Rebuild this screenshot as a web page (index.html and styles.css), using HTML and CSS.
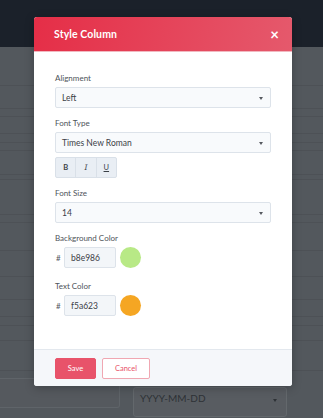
FILE: index.html
```html
<!DOCTYPE html>
<html>
<head>
  <link rel="stylesheet" href="styles.css">
</head>
<body>
  <!-- page behind the modal -->
  <div class="page">
    <div class="topbar"></div>
    <div class="rows">
      <div class="row" style="height: 39px;"></div>
      <div class="row" style="height: 23px;"></div>
      <div class="row" style="height: 8px;"></div>
      <div class="row" style="height: 17px;"></div>
      <div class="row" style="height: 9px;"></div>
      <div class="row" style="height: 8px;"></div>
      <div class="row" style="height: 24px;"></div>
      <div class="row" style="height: 5px;"></div>
      <div class="row" style="height: 35px;"></div>
      <div class="row" style="height: 8px;"></div>
      <div class="row" style="height: 28px;"></div>
      <div class="row" style="height: 26px;"></div>
      <div class="row" style="height: 23px;"></div>
      <div class="row" style="height: 17px;"></div>
      <div class="row" style="height: 9px;"></div>
      <div class="row" style="height: 15px;"></div>
      <div class="row" style="height: 30px;"></div>
    </div>
    <div class="page-fields">
      <div class="page-input"></div>
      <div class="page-select">YYYY-MM-DD <span class="caret"></span></div>
    </div>
  </div>

  <!-- Style Column modal -->
  <div class="overlay">
    <div class="modal">
      <div class="modal-header">
        <h2>Style Column</h2>
        <span class="close">&times;</span>
      </div>

      <div class="modal-body">
        <label>Alignment</label>
        <div class="select">Left <span class="caret"></span></div>

        <label class="spaced">Font Type</label>
        <div class="select">Times New Roman <span class="caret"></span></div>
        <div class="format-group">
          <span class="fmt fmt-b">B</span>
          <span class="fmt fmt-i">I</span>
          <span class="fmt fmt-u">U</span>
        </div>

        <label class="spaced">Font Size</label>
        <div class="select">14 <span class="caret"></span></div>

        <label class="spaced">Background Color</label>
        <div class="color-row">
          <span class="hash">#</span>
          <div class="hex-input">b8e986</div>
          <span class="swatch" style="background: #b8e986;"></span>
        </div>

        <label class="spaced-lg">Text Color</label>
        <div class="color-row">
          <span class="hash">#</span>
          <div class="hex-input">f5a623</div>
          <span class="swatch" style="background: #f5a623;"></span>
        </div>
      </div>

      <div class="modal-footer">
        <button class="btn-save">Save</button>
        <button class="btn-cancel">Cancel</button>
      </div>
    </div>
  </div>
</body>
</html>
```

FILE: styles.css
```css
* {
  box-sizing: border-box;
  margin: 0;
  padding: 0;
}

body {
  font-family: 'Lato', 'Open Sans', sans-serif;
  width: 323px;
  height: 418px;
  overflow: hidden;
  position: relative;
  background: #53585d;
}

/* Page behind the modal */
.page {
  height: 418px;
}

.topbar {
  height: 47px;
  background: #1b212a;
}

.row {
  border-bottom: 1px solid rgba(0, 0, 0, 0.07);
}

.page-fields {
  display: flex;
  gap: 13px;
  padding-top: 7px;
}

.page-input {
  width: 120px;
  height: 30px;
  background: #55595e;
  border: 1px solid #5f6469;
  border-left: none;
  border-radius: 0 3px 3px 0;
}

.page-select {
  width: 154px;
  height: 30px;
  margin-top: 9px;
  background: #585c61;
  border: 1px solid #63686c;
  border-radius: 3px;
  color: #2e3236;
  font-size: 10px;
  padding: 4px 6px;
  position: relative;
}

.page-select .caret {
  right: 9px;
  top: 11px;
  border-top-color: #2e3236;
}

/* Modal */
.overlay {
  position: absolute;
  top: 0;
  left: 0;
  width: 100%;
  height: 100%;
  padding: 17px 0 0 34px;
}

.modal {
  width: 258px;
  background: #ffffff;
  border-radius: 3px;
  overflow: hidden;
  box-shadow: 0 2px 10px rgba(0, 0, 0, 0.25);
}

.modal-header {
  height: 35px;
  background: linear-gradient(100deg, #e52e47, #e5596c);
  display: flex;
  align-items: center;
  justify-content: space-between;
  padding: 0 13px 0 20px;
  border-bottom: 1px solid #f1b8c0;
}

.modal-header h2 {
  color: #ffffff;
  font-size: 10.5px;
  font-weight: 700;
  letter-spacing: 0.1px;
}

.close {
  color: #ffffff;
  font-size: 15px;
  font-weight: 700;
  line-height: 1;
}

.modal-body {
  padding: 21px 21px 33px;
}

label {
  display: block;
  font-size: 8px;
  line-height: 10px;
  color: #4e5359;
  margin-bottom: 4px;
}

label.spaced {
  margin-top: 10px;
}

label.spaced-lg {
  margin-top: 13px;
}

.select {
  height: 21px;
  background: #f8fafc;
  border: 1px solid #dde3ea;
  border-radius: 2px;
  font-size: 8.5px;
  color: #3b4046;
  display: flex;
  align-items: center;
  padding: 0 6px;
  position: relative;
}

.caret {
  position: absolute;
  right: 7px;
  top: 9px;
  width: 0;
  height: 0;
  border-left: 2.5px solid transparent;
  border-right: 2.5px solid transparent;
  border-top: 3px solid #55595f;
}

.format-group {
  display: flex;
  width: 62px;
  margin-top: 4px;
  border: 1px solid #d9e0e8;
  border-radius: 2px;
  background: #e9eef4;
}

.fmt {
  flex: 1;
  height: 19px;
  display: flex;
  align-items: center;
  justify-content: center;
  font-size: 7.5px;
  color: #3b4046;
}

.fmt + .fmt {
  border-left: 1px solid #d9e0e8;
}

.fmt-b {
  font-weight: 700;
}

.fmt-i {
  font-style: italic;
  font-family: 'DejaVu Serif', serif;
}

.fmt-u {
  text-decoration: underline;
}

.color-row {
  display: flex;
  align-items: center;
}

.hash {
  font-size: 8px;
  color: #55595f;
  width: 8px;
  margin-left: 1px;
}

.hex-input {
  width: 52px;
  height: 21px;
  background: #f3f6f9;
  border: 1px solid #dde3ea;
  border-radius: 2px;
  font-size: 8.5px;
  color: #3b4046;
  display: flex;
  align-items: center;
  padding: 0 6px;
}

.swatch {
  width: 21px;
  height: 21px;
  border-radius: 50%;
  margin-left: 4px;
}

.modal-footer {
  background: #f5f7fa;
  border-top: 1px solid #e3e8ee;
  padding: 8px 21px 7px;
  display: flex;
  gap: 6px;
}

.modal-footer button {
  height: 21px;
  font-family: 'Lato', 'Open Sans', sans-serif;
  font-size: 7.5px;
  border-radius: 2px;
}

.btn-save {
  width: 41px;
  background: #e8536a;
  border: 1px solid #e8536a;
  color: #ffffff;
}

.btn-cancel {
  width: 48px;
  background: #ffffff;
  border: 1px solid #f0a7b2;
  color: #e8536a;
}
```
